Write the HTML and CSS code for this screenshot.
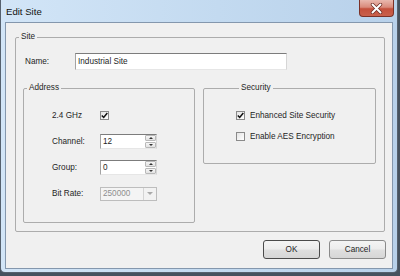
FILE: index.html
```html
<!DOCTYPE html>
<html lang="en">
<head>
  <meta charset="UTF-8">
  <title>Edit Site</title>
  <link rel="stylesheet" href="styles.css">
</head>
<body>
  <div class="window">
    <div class="titlebar">
      <span class="title">Edit Site</span>
      <div class="close" aria-label="Close">
        <svg width="13" height="11" viewBox="0 0 13 11">
          <path d="M2.5 1.5 L10.5 9.5 M10.5 1.5 L2.5 9.5" stroke="#6b2a22" stroke-width="3.4" stroke-linecap="round"/>
          <path d="M2.5 1.5 L10.5 9.5 M10.5 1.5 L2.5 9.5" stroke="#ffffff" stroke-width="2" stroke-linecap="round"/>
        </svg>
      </div>
    </div>

    <div class="client">
      <fieldset class="group site">
        <legend>Site</legend>
        <div class="name-row">
          <span class="label">Name:</span>
          <div class="textbox">Industrial Site</div>
        </div>

        <div class="groups">
          <fieldset class="group address">
            <legend>Address</legend>
            <div class="field">
              <span class="label">2.4 GHz</span>
              <span class="check checked">
                <svg width="7" height="7" viewBox="0 0 7 7"><path d="M0.8 3.4 L2.7 5.4 L6.3 1" stroke="#111" stroke-width="1.5" fill="none"/></svg>
              </span>
            </div>
            <div class="field">
              <span class="label">Channel:</span>
              <div class="spin">
                <span class="value">12</span>
                <span class="arrows"><span class="up"></span><span class="down"></span></span>
              </div>
            </div>
            <div class="field">
              <span class="label">Group:</span>
              <div class="spin">
                <span class="value">0</span>
                <span class="arrows"><span class="up"></span><span class="down"></span></span>
              </div>
            </div>
            <div class="field">
              <span class="label">Bit Rate:</span>
              <div class="combo disabled">
                <span class="value">250000</span>
                <span class="drop"></span>
              </div>
            </div>
          </fieldset>

          <fieldset class="group security">
            <legend>Security</legend>
            <div class="option">
              <span class="check checked">
                <svg width="7" height="7" viewBox="0 0 7 7"><path d="M0.8 3.4 L2.7 5.4 L6.3 1" stroke="#111" stroke-width="1.5" fill="none"/></svg>
              </span>
              <span>Enhanced Site Security</span>
            </div>
            <div class="option">
              <span class="check"></span>
              <span>Enable AES Encryption</span>
            </div>
          </fieldset>
        </div>
      </fieldset>

      <div class="actions">
        <button class="btn default">OK</button>
        <button class="btn">Cancel</button>
      </div>
    </div>
  </div>
</body>
</html>
```

FILE: styles.css
```css
* {
  box-sizing: border-box;
}

body {
  margin: 0;
  width: 400px;
  height: 276px;
  overflow: hidden;
  background: #46525f;
  font-family: 'Liberation Sans', Arial, sans-serif;
  font-size: 8.2px;
  color: #1e1e1e;
}

/* Window frame */
.window {
  width: 398px;
  height: 273px;
  display: flex;
  flex-direction: column;
  padding: 0 4px 3px 4px;
  border: 1px solid #56616e;
  border-top: 0;
  border-radius: 0 0 5px 5px;
  background: linear-gradient(90deg, #d2e5f7, #c3daf0 55%, #b8d1ea);
}

.titlebar {
  height: 22px;
  display: flex;
  align-items: flex-start;
}

.title {
  margin: 6px 0 0 1px;
  font-size: 9.6px;
  line-height: 11px;
  color: #111;
}

.close {
  margin-left: auto;
  margin-right: -1px;
  width: 35px;
  height: 17px;
  display: flex;
  justify-content: center;
  align-items: center;
  border: 1px solid #7b3127;
  border-top: 0;
  border-radius: 0 0 4px 4px;
  background: linear-gradient(#e9b8ae, #d98a7b 45%, #c4503c 55%, #c9614c);
}

.client {
  flex: 1;
  display: flex;
  flex-direction: column;
  padding: 9px 7px 0 9px;
  border: 1px solid #8497ad;
  background: #f0f0f0;
}

/* Group boxes */
.group {
  margin: 0;
  padding: 0;
  min-width: 0;
  border: 1px solid #acacac;
  border-radius: 2px;
}

.group legend {
  margin-left: 3px;
  padding: 0 2px;
  height: 10px;
  line-height: 10px;
}

.site {
  width: 370px;
  height: 200px;
}

.name-row {
  display: flex;
  align-items: center;
  margin-top: 11px;
  padding-left: 9px;
}

.name-row .label {
  width: 50px;
}

.textbox {
  width: 212px;
  height: 17px;
  padding-left: 2px;
  line-height: 15px;
  background: #fff;
  border: 1px solid;
  border-color: #7c7c7c #d6d6d6 #e6e6e6 #a3a3a3;
}

.groups {
  display: flex;
  align-items: flex-start;
  gap: 8px;
  margin: 13px 0 0 7px;
}

.address {
  width: 172px;
  height: 140px;
  padding-top: 15px;
  display: flex;
  flex-direction: column;
  gap: 11px;
}

.field {
  display: flex;
  align-items: center;
  height: 15px;
  padding-left: 28px;
}

.field .label {
  width: 48px;
}

/* Checkbox */
.check {
  width: 9px;
  height: 9px;
  display: flex;
  justify-content: center;
  align-items: center;
  border: 1px solid #8a8a8a;
  background: linear-gradient(135deg, #e4e4e4, #ffffff);
}

/* Spin box */
.spin {
  width: 57px;
  height: 15px;
  display: flex;
  background: #fff;
  border: 1px solid;
  border-color: #7c7c7c #d6d6d6 #e6e6e6 #a3a3a3;
}

.spin .value {
  flex: 1;
  padding-left: 2px;
  line-height: 13px;
}

.spin .arrows {
  width: 11px;
  display: flex;
  flex-direction: column;
  gap: 1px;
}

.spin .up,
.spin .down {
  flex: 1;
  display: flex;
  justify-content: center;
  align-items: center;
  border: 1px solid #b9b9b9;
  border-radius: 1px;
  background: linear-gradient(#f6f6f6, #e2e2e2);
}

.spin .up::after {
  content: '';
  border: 2px solid transparent;
  border-top: 0;
  border-bottom: 2px solid #333;
}

.spin .down::after {
  content: '';
  border: 2px solid transparent;
  border-bottom: 0;
  border-top: 2px solid #333;
}

/* Disabled combo */
.combo {
  width: 57px;
  height: 14px;
  display: flex;
  border: 1px solid #bdbdbd;
  background: #f4f4f4;
}

.combo .value {
  flex: 1;
  padding-left: 2px;
  line-height: 12px;
  color: #8e8e8e;
}

.combo .drop {
  width: 13px;
  display: flex;
  justify-content: center;
  align-items: center;
  border-left: 1px solid #d4d4d4;
  background: #f2f2f2;
}

.combo .drop::after {
  content: '';
  border: 3px solid transparent;
  border-bottom: 0;
  border-top: 3px solid #a9a9a9;
}

/* Security options */
.security {
  width: 173px;
  height: 81px;
  padding: 17px 0 0 32px;
  display: flex;
  flex-direction: column;
  gap: 10px;
}

.option {
  display: flex;
  align-items: center;
  gap: 5px;
  height: 11px;
}

/* Dialog buttons */
.actions {
  display: flex;
  justify-content: flex-end;
  gap: 9px;
  margin: 8px -1px 0 0;
}

.btn {
  width: 57px;
  height: 19px;
  padding: 0;
  font-family: inherit;
  font-size: 8.2px;
  color: #1e1e1e;
  border: 1px solid #8a8a8a;
  border-radius: 3px;
  background: linear-gradient(#f4f4f4, #ececec 48%, #dfdfdf 52%, #d6d6d6);
}

.btn.default {
  border-color: #4a4a4a;
}
```
